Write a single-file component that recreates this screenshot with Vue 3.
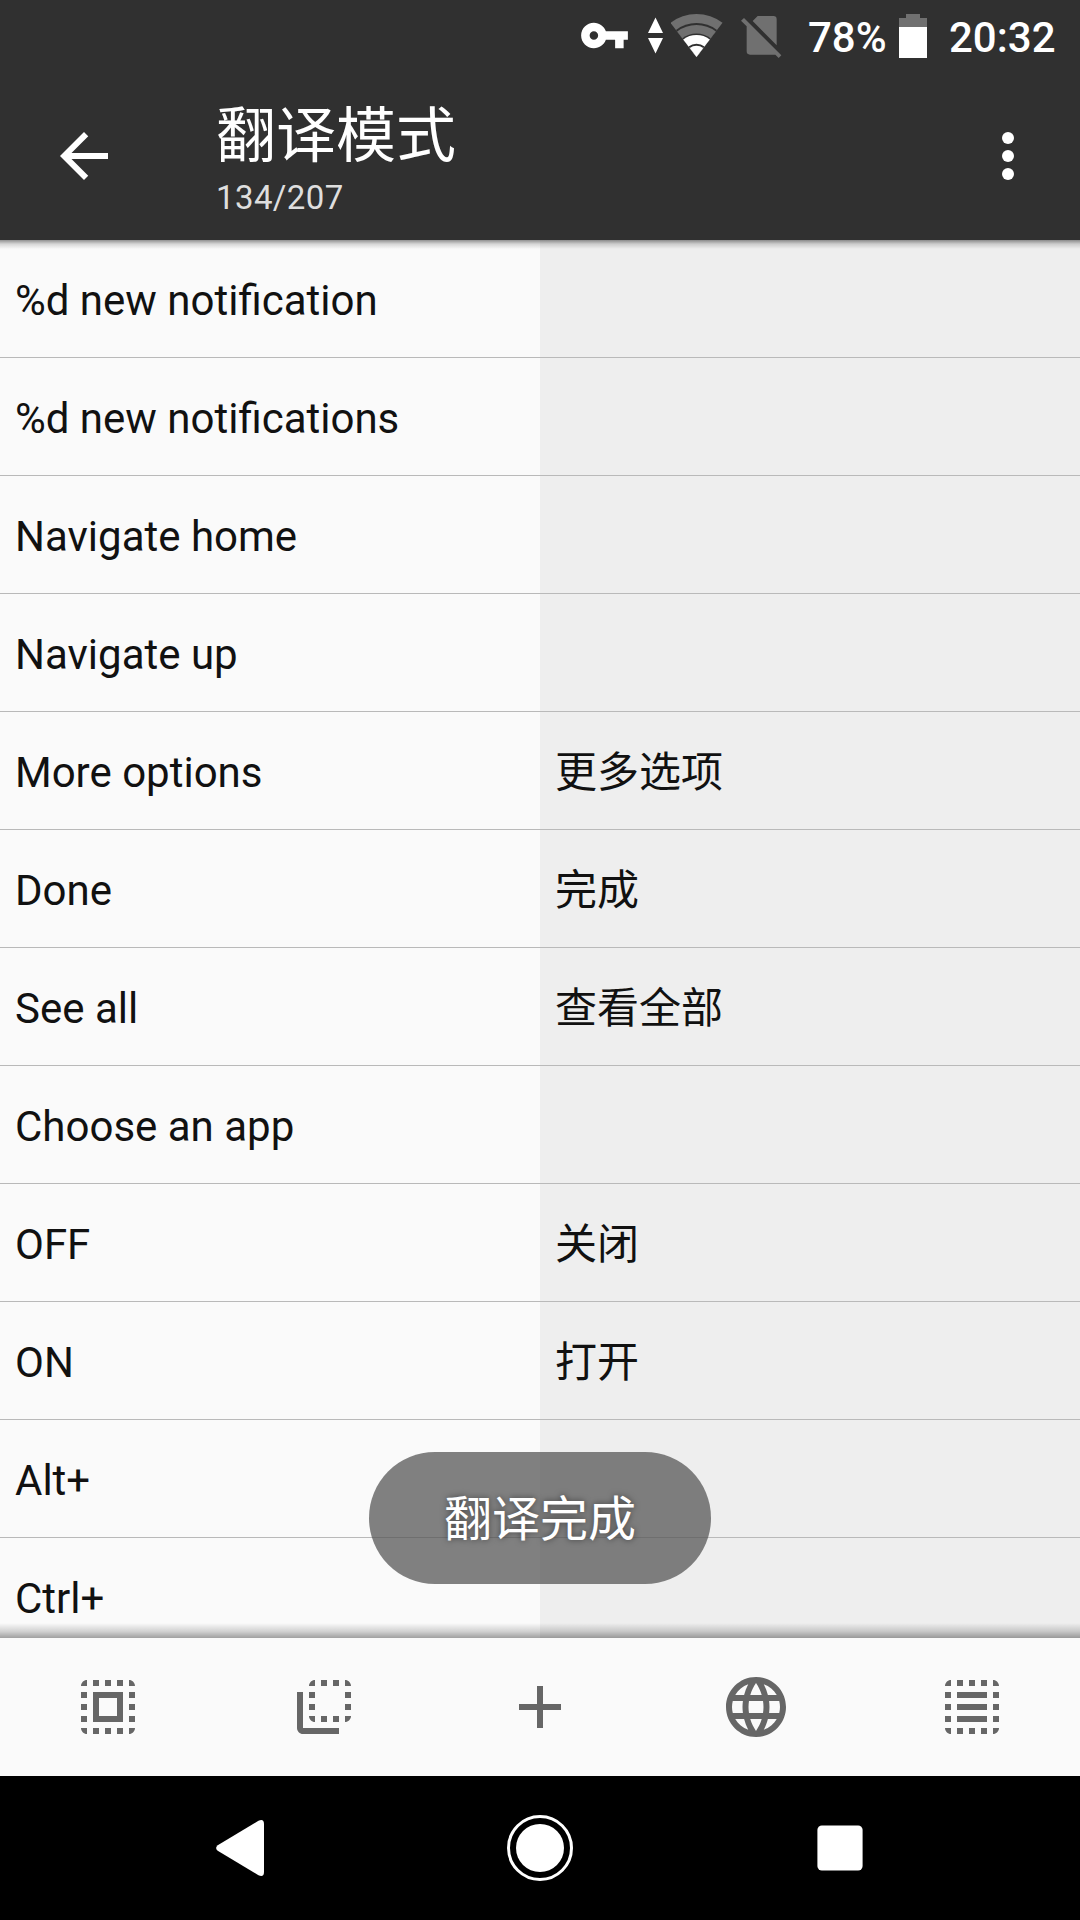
<script setup>
const rows = [
  ['%d new notification', ''],
  ['%d new notifications', ''],
  ['Navigate home', ''],
  ['Navigate up', ''],
  ['More options', '更多选项'],
  ['Done', '完成'],
  ['See all', '查看全部'],
  ['Choose an app', ''],
  ['OFF', '关闭'],
  ['ON', '打开'],
  ['Alt+', ''],
  ['Ctrl+', ''],
]

// Dashed 18-unit frame shared by the two selection icons
const frame =
  'M3 5h2V3c-1.1 0-2 .9-2 2zM19 3v2h2c0-1.1-.9-2-2-2zM5 21v-2H3c0 1.1.9 2 2 2zM19 21c1.1 0 2-.9 2-2h-2v2z' +
  'M7 3h2v2H7zM11 3h2v2h-2zM15 3h2v2h-2zM7 19h2v2H7zM11 19h2v2h-2zM15 19h2v2h-2z' +
  'M3 7h2v2H3zM3 11h2v2H3zM3 15h2v2H3zM19 7h2v2h-2zM19 11h2v2h-2zM19 15h2v2h-2z'

const tools = [
  { name: 'select-all', d: frame + 'M7 17h10V7H7v10zm2-8h6v6H9V9z' },
  {
    name: 'flip-to-back',
    d:
      'M7 5h2V3c-1.1 0-2 .9-2 2zM19 3v2h2c0-1.1-.9-2-2-2zM9 17v-2H7c0 1.1.9 2 2 2zM19 17c1.1 0 2-.9 2-2h-2v2z' +
      'M11 3h2v2h-2zM15 3h2v2h-2zM11 15h2v2h-2zM15 15h2v2h-2zM7 7h2v2H7zM7 11h2v2H7zM19 7h2v2h-2zM19 11h2v2h-2z' +
      'M5 7H3v12c0 1.1.9 2 2 2h12v-2H5V7z',
  },
  { name: 'add', d: 'M19 13h-6v6h-2v-6H5v-2h6V5h2v6h6v2z' },
  {
    name: 'language',
    d: 'M11.99 2C6.47 2 2 6.48 2 12s4.47 10 9.99 10C17.52 22 22 17.52 22 12S17.52 2 11.99 2zm6.93 6h-2.95c-.32-1.25-.78-2.45-1.38-3.56 1.84.63 3.37 1.91 4.33 3.56zM12 4.04c.83 1.2 1.48 2.53 1.91 3.96h-3.82c.43-1.43 1.08-2.76 1.91-3.96zM4.26 14C4.1 13.36 4 12.69 4 12s.1-1.36.26-2h3.38c-.08.66-.14 1.32-.14 2 0 .68.06 1.34.14 2H4.26zm.82 2h2.95c.32 1.25.78 2.45 1.38 3.56-1.84-.63-3.37-1.9-4.33-3.56zm2.95-8H5.08c.96-1.66 2.49-2.93 4.33-3.56C8.81 5.55 8.35 6.75 8.03 8zM12 19.96c-.83-1.2-1.48-2.53-1.91-3.96h3.82c-.43 1.43-1.08 2.76-1.91 3.96zM14.34 14H9.66c-.09-.66-.16-1.32-.16-2 0-.68.07-1.35.16-2h4.68c.09.65.16 1.32.16 2 0 .68-.07 1.34-.16 2zm.25 5.56c.6-1.11 1.06-2.31 1.38-3.56h2.95c-.96 1.65-2.49 2.93-4.33 3.56zM16.36 14c.08-.66.14-1.32.14-2 0-.68-.06-1.34-.14-2h3.38c.16.64.26 1.31.26 2s-.1 1.36-.26 2h-3.38z',
  },
  { name: 'select-lines', d: frame + 'M7 7h10v2H7zM7 11h10v2H7zM7 15h10v2H7z' },
]

// Wi-Fi rings, painted from the outside in
const rings = [
  [43, '#707070'],
  [34, '#303030'],
  [32, '#707070'],
  [23.4, '#303030'],
  [22, '#ffffff'],
  [13.2, '#303030'],
  [11.2, '#ffffff'],
].map(([r, fill]) => {
  const x = 0.605 * r
  const y = 43 - 0.796 * r
  return { fill, d: `M25.5 43L${25.5 - x} ${y}A${r} ${r} 0 0 1 ${25.5 + x} ${y}Z` }
})
</script>

<template>
  <div class="screen">
    <div class="status">
      <svg class="key" width="51" height="51" viewBox="0 0 24 24">
        <path fill="#fff" d="M12.65 10C11.83 7.67 9.61 6 7 6c-3.31 0-6 2.69-6 6s2.69 6 6 6c2.61 0 4.83-1.67 5.65-4H17v4h4v-4h2v-4H12.65zM7 14c-1.1 0-2-.9-2-2s.9-2 2-2 2 .9 2 2-.9 2-2 2z" />
      </svg>
      <svg class="traffic" width="16" height="37" viewBox="0 0 16 37">
        <path fill="#fff" d="M7.5 .5L15 16H0zM7.5 36.5L0 21h15z" />
      </svg>
      <svg class="wifi" width="52" height="43" viewBox="0 0 52 43">
        <path v-for="(r, i) in rings" :key="i" :fill="r.fill" :d="r.d" />
      </svg>
      <svg class="sim" width="42" height="44" viewBox="540 45 126 132">
        <path fill="#707070" d="M578 63L593 48H640Q650 48 650 58V136ZM552 54L664 166L656 174L646 164H570Q560 164 560 154V79L543 62Z" />
      </svg>
      <span class="percent">78%</span>
      <svg class="battery" width="28" height="44" viewBox="0 0 28 44">
        <path fill="#707070" d="M7 0h14v4h7v9H0V4h7z" />
        <path fill="#fff" d="M0 13h28v31H0z" />
      </svg>
      <span class="clock">20:32</span>
    </div>

    <header class="appbar">
      <svg class="icon back" viewBox="0 0 24 24">
        <path fill="#fff" d="M20 11H7.83l5.59-5.59L12 4l-8 8 8 8 1.41-1.41L7.83 13H20v-2z" />
      </svg>
      <div class="titles">
        <div class="title">翻译模式</div>
        <div class="subtitle">134/207</div>
      </div>
      <svg class="icon more" viewBox="0 0 24 24" fill="#fff">
        <circle cx="12" cy="6" r="2" /><circle cx="12" cy="12" r="2" /><circle cx="12" cy="18" r="2" />
      </svg>
    </header>

    <main class="list">
      <div v-for="row in rows" :key="row[0]" class="row">
        <div class="cell source">{{ row[0] }}</div>
        <div class="cell target">{{ row[1] }}</div>
      </div>
      <div class="shade top"></div>
      <div class="shade bottom"></div>
      <div class="toast">翻译完成</div>
    </main>

    <footer class="tools">
      <div v-for="t in tools" :key="t.name" class="tool">
        <svg class="icon" viewBox="0 0 24 24"><path fill="#666" :d="t.d" /></svg>
      </div>
    </footer>

    <nav class="nav">
      <div class="key-slot">
        <svg width="48" height="56" viewBox="0 0 48 56">
          <path fill="#fff" d="M1.7 25.2L42.5.8Q48-1.5 48 4V52Q48 57.5 42.5 55.2L1.7 30.8Q-1.5 28 1.7 25.2Z" />
        </svg>
      </div>
      <div class="key-slot">
        <svg width="66" height="66" viewBox="0 0 66 66">
          <circle cx="33" cy="33" r="31.5" fill="none" stroke="#fff" stroke-width="3" />
          <circle cx="33" cy="33" r="24" fill="#fff" />
        </svg>
      </div>
      <div class="key-slot">
        <svg width="46" height="46" viewBox="0 0 46 46">
          <rect x=".4" y=".4" width="45.2" height="45.2" rx="4.5" fill="#fff" />
        </svg>
      </div>
    </nav>
  </div>
</template>

<style>
body {
  margin: 0;
  background: #000;
}
</style>

<style scoped>
.screen {
  width: 1080px;
  height: 1920px;
  display: flex;
  flex-direction: column;
  overflow: hidden;
  font-family: Roboto, "Noto Sans CJK SC", sans-serif;
}
svg {
  display: block;
  flex: none;
}
.icon {
  width: 72px;
  height: 72px;
}
.status {
  height: 72px;
  flex: none;
  display: flex;
  align-items: flex-start;
  justify-content: flex-end;
  padding-right: 24px;
  background: #303030;
  color: #fff;
  font-size: 42px;
  font-weight: 500;
  line-height: 49px;
}
.key {
  margin: 10px 18px 0 0;
}
.traffic {
  margin: 17px 7px 0 0;
}
.wifi {
  margin: 14px 17px 0 0;
}
.sim {
  margin: 15px 26px 0 0;
}
.percent {
  width: 80px;
  margin: 13px 11px 0 0;
  white-space: nowrap;
}
.battery {
  margin: 14px 22px 0 0;
}
.clock {
  width: 107px;
  margin-top: 13px;
}
.appbar {
  height: 168px;
  flex: none;
  display: flex;
  align-items: center;
  padding: 0 36px 0 48px;
  background: #303030;
  color: #fff;
}
.titles {
  flex: 1;
  height: 168px;
  padding-left: 96px;
}
.title {
  margin-top: 25px;
  font-size: 60px;
  line-height: 80px;
}
.subtitle {
  margin-top: 1px;
  font-size: 33px;
  line-height: 40px;
  letter-spacing: 0.4px;
  color: #dedede;
}
.list {
  position: relative;
  flex: 1;
  min-height: 0;
  overflow: hidden;
}
.row {
  display: flex;
  height: 117px;
  border-bottom: 1px solid #b9b9b9;
}
.cell {
  width: 540px;
  box-sizing: border-box;
  padding: 0 15px;
  font-size: 42px;
  line-height: 122px;
  height: 117px;
  color: #111;
  overflow: hidden;
}
.source {
  background: #fafafa;
}
.target {
  background: #eee;
}
.shade {
  position: absolute;
  left: 0;
  right: 0;
}
.shade.top {
  top: 0;
  height: 9px;
  background: linear-gradient(rgba(0, 0, 0, 0.42), rgba(0, 0, 0, 0.14) 45%, transparent);
}
.shade.bottom {
  bottom: 0;
  height: 15px;
  background: linear-gradient(transparent, rgba(0, 0, 0, 0.16) 55%, rgba(0, 0, 0, 0.36));
}
.toast {
  position: absolute;
  left: 369px;
  bottom: 54px;
  width: 342px;
  height: 132px;
  border-radius: 66px;
  background: rgba(87, 87, 87, 0.75);
  color: #fff;
  font-size: 48px;
  line-height: 135px;
  text-align: center;
  text-shadow: 0 0 6px rgba(0, 0, 0, 0.5);
}
.tools {
  height: 138px;
  flex: none;
  display: flex;
  background: #fafafa;
}
.tool {
  flex: 1;
  display: flex;
  align-items: center;
  justify-content: center;
}
.nav {
  height: 144px;
  flex: none;
  display: flex;
  padding: 0 90px;
  background: #000;
}
.key-slot {
  flex: 1;
  display: flex;
  align-items: center;
  justify-content: center;
}
</style>
